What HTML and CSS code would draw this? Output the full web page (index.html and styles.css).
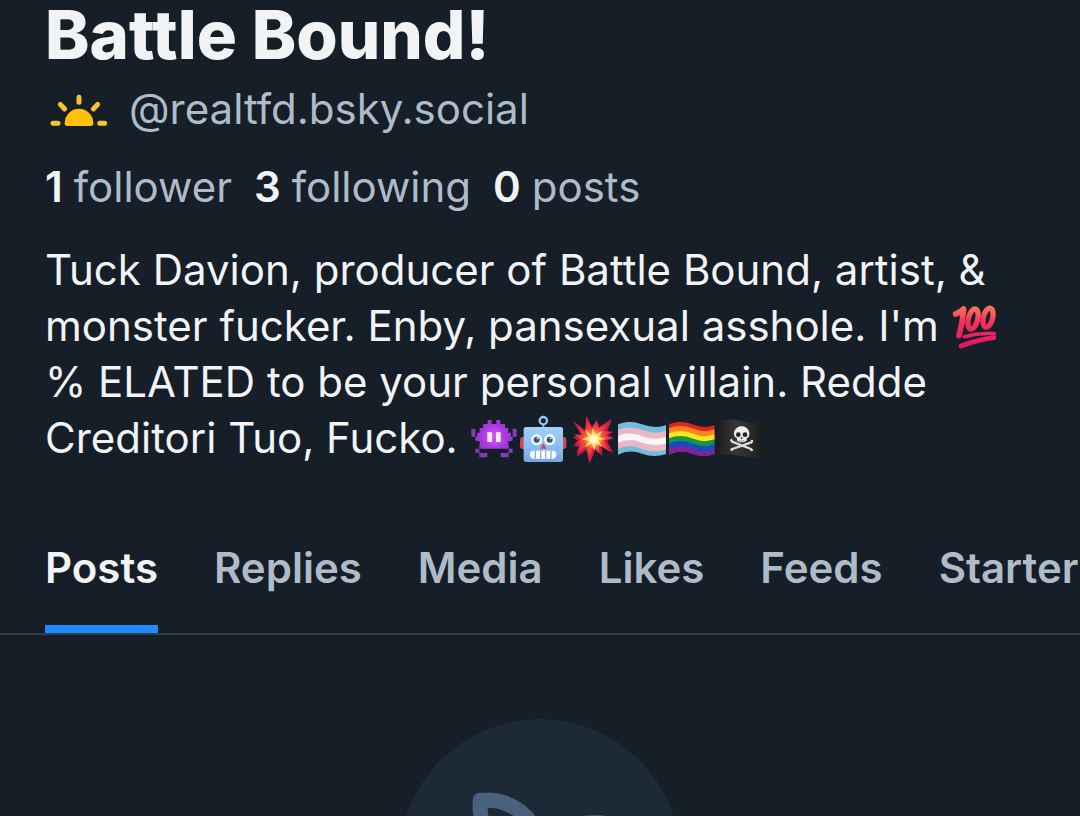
FILE: index.html
```html
<!DOCTYPE html>
<html lang="en">
<head>
    <meta charset="UTF-8">
    <meta name="viewport" content="width=device-width, initial-scale=1.0">
    <title>Battle Bound!</title>
    <link rel="stylesheet" href="styles.css">
</head>
<body>

<header class="profile">
    <h1 class="profile-name">Battle Bound!</h1>
    <div class="handle">
        <svg class="sun" viewBox="45 258 192 132" aria-hidden="true">
            <path d="M104 367a43 44 0 0 1 86 0q0 8-8 8h-70q-8 0-8-8z" fill="#ffc107"/>
            <path d="M147 289v15M91 310l13 14M203 310l-13 14M69 367h15M209 367h15" stroke="#f4c430" stroke-width="15" stroke-linecap="round"/>
        </svg>
        <span>@realtfd.bsky.social</span>
    </div>
    <div class="stats">
        <a class="stat" href="#"><strong>1</strong> follower</a>
        <a class="stat" href="#"><strong>3</strong> following</a>
        <span class="stat"><strong>0</strong> posts</span>
    </div>
    <p class="bio">
        Tuck Davion, producer of Battle Bound, artist, &amp; monster fucker. Enby, pansexual asshole. I'm
        <!-- hundred points -->
        <svg class="emoji" viewBox="62 38 147 147" role="img" aria-label="100">
            <defs>
                <linearGradient id="hundred" x1="0" y1="45" x2="0" y2="175" gradientUnits="userSpaceOnUse">
                    <stop offset="0" stop-color="#ff7a5c"/>
                    <stop offset=".4" stop-color="#f5305a"/>
                    <stop offset="1" stop-color="#e8106a"/>
                </linearGradient>
            </defs>
            <g fill="none" stroke="url(#hundred)" stroke-linecap="round" stroke-linejoin="round">
                <path stroke-width="17" d="M76 71q15-5 24-15q-3 42-14 80"/>
                <ellipse cx="128" cy="86" rx="14" ry="31" stroke-width="16" transform="rotate(14 128 86)"/>
                <ellipse cx="173" cy="82" rx="14" ry="29" stroke-width="16" transform="rotate(14 173 82)"/>
                <path stroke-width="11" d="M102 139q44-12 90-9"/>
                <path stroke-width="14" d="M92 167q50-19 99-25"/>
            </g>
        </svg>% ELATED to be your personal villain. Redde Creditori Tuo, Fucko.
        <!-- alien monster -->
        <svg class="emoji" viewBox="15 15 147 147" role="img" aria-label="Alien monster">
            <defs>
                <radialGradient id="alien" cx="87" cy="80" r="70" gradientUnits="userSpaceOnUse">
                    <stop offset="0" stop-color="#d65cf5"/>
                    <stop offset=".5" stop-color="#aa38e2"/>
                    <stop offset="1" stop-color="#7d3cae"/>
                </radialGradient>
            </defs>
            <path fill="url(#alien)" d="M68 30h12v12h14V30h12v12h14v12h10v14h8v26h-8v12h-10v10H54v-10H44V94h-8V68h8V54h10V42h14z"/>
            <path fill="url(#alien)" d="M19 56h12v24H19zM31 80h12v12H31zM143 56h12v24h-12zM131 80h12v12h-12zM43 104h12v12H43zM31 116h12v13H31zM43 129h24v13H43zM119 104h12v12h-12zM131 116h12v13h-12zM107 129h24v13h-24z"/>
            <path fill="#fff0ff" d="M67 67h14v29H67zM93 67h14v29H93z"/>
        </svg><svg class="emoji" viewBox="177 30 147 147" role="img" aria-label="Robot">
            <defs>
                <linearGradient id="robot" x1="0" y1="65" x2="0" y2="172" gradientUnits="userSpaceOnUse">
                    <stop offset="0" stop-color="#a3d0fa"/>
                    <stop offset=".7" stop-color="#85b9ef"/>
                    <stop offset="1" stop-color="#73a5df"/>
                </linearGradient>
            </defs>
            <rect x="180" y="96" width="20" height="36" rx="9" fill="#c64d60"/>
            <rect x="299" y="96" width="20" height="36" rx="9" fill="#c64d60"/>
            <path d="M250 58v12" stroke="#7bb2e6" stroke-width="6"/>
            <circle cx="250" cy="47" r="11" fill="none" stroke="#91c7f5" stroke-width="7"/>
            <rect x="191" y="66" width="118" height="105" rx="7" fill="url(#robot)"/>
            <circle cx="230" cy="104" r="17" fill="#eff4f5"/>
            <circle cx="269" cy="104" r="17" fill="#eff4f5"/>
            <circle cx="230" cy="104" r="9" fill="#355467"/>
            <circle cx="269" cy="104" r="9" fill="#355467"/>
            <circle cx="233" cy="100" r="3" fill="#fff"/>
            <circle cx="272" cy="100" r="3" fill="#fff"/>
            <path d="M250 114l10 17h-20z" fill="#c94e62"/>
            <rect x="210" y="137" width="79" height="24" rx="12" fill="#fff"/>
            <path d="M226 137v24M242 137v24M257 137v24M273 137v24" stroke="#83afe2" stroke-width="4"/>
        </svg><svg class="emoji" viewBox="326 30 147 147" role="img" aria-label="Collision">
            <defs>
                <radialGradient id="boom" cx="403" cy="102" r="68" gradientUnits="userSpaceOnUse">
                    <stop offset="0" stop-color="#fff8b0"/>
                    <stop offset=".2" stop-color="#ffb14a"/>
                    <stop offset=".45" stop-color="#f54d36"/>
                    <stop offset="1" stop-color="#d9124b"/>
                </radialGradient>
            </defs>
            <path fill="#c41c4b" d="M341 48l36 27 4-43 17 33 15-20 7 21 38-25-14 37 17 3-15 10 18 8-21 8 18 36-34-17 2 26-21-17-17 40-10-40-29 20 12-28-22-5 18-11-18-15 25-5z"/>
            <path fill="url(#boom)" d="M345 52l34 31 3-47 16 36 13-24 6 22 36-25-20 33 20 4-17 9 22 9-25 6 18 34-31-22-1 26-17-19-12 46-9-46-30 22 13-32-21 1 22-12-21-16 24 1z"/>
            <path fill="#ffe07a" d="M376 72l21 19 3-22 9 20 20-12-11 19 20 6-20 5 10 18-17-9-6 20-8-21-20 12 12-20-22-4 21-8z"/>
            <circle cx="403" cy="102" r="12" fill="#fff9c4"/>
        </svg><svg class="emoji" viewBox="21 30 147 147" role="img" aria-label="Transgender flag">
            <defs>
                <clipPath id="trans"><path d="M24 58q35-16 72 0 38 14 72 3v86q-36 12-72-1-38-14-72 3z"/></clipPath>
            </defs>
            <g clip-path="url(#trans)" fill="none" stroke-width="20">
                <rect x="21" y="40" width="147" height="120" fill="#72bddd"/>
                <path stroke="#e9b8c5" d="M20 86q38-17 76-1 38 15 74 2"/>
                <path stroke="#e9b8c5" d="M20 122q38-17 76-1 38 15 74 2"/>
                <path stroke="#faf5f7" stroke-width="19" d="M20 104q38-17 76-1 38 15 74 2"/>
            </g>
        </svg><svg class="emoji" viewBox="168 30 147 147" role="img" aria-label="Rainbow flag">
            <defs>
                <clipPath id="rainbow"><path d="M177 58q35-16 70 0 34 14 67 3v86q-34 12-68-1-34-14-69 3z"/></clipPath>
            </defs>
            <g clip-path="url(#rainbow)" fill="none" stroke-width="17">
                <rect x="168" y="40" width="147" height="120" fill="#df2422"/>
                <path stroke="#f58622" d="M175 80q36-17 72-1 34 15 69 2"/>
                <path stroke="#ffe51e" d="M175 95q36-17 72-1 34 15 69 2"/>
                <path stroke="#159548" d="M175 110q36-17 72-1 34 15 69 2"/>
                <path stroke="#174bc0" d="M175 125q36-17 72-1 34 15 69 2"/>
                <path stroke="#7a2499" d="M175 141q36-17 72-1 34 15 69 2"/>
            </g>
        </svg><svg class="emoji" viewBox="315 30 147 147" role="img" aria-label="Pirate flag">
            <defs>
                <linearGradient id="pirate" x1="328" x2="466" y1="0" y2="0" gradientUnits="userSpaceOnUse">
                    <stop offset="0" stop-color="#202020"/>
                    <stop offset=".35" stop-color="#383838"/>
                    <stop offset=".7" stop-color="#292929"/>
                    <stop offset="1" stop-color="#161719"/>
                </linearGradient>
            </defs>
            <path fill="url(#pirate)" d="M328 49q32-10 68-1 34 10 66 4v103q-33 6-67-2-34-8-67-2z"/>
            <path stroke="#dcdcdc" stroke-width="7" stroke-linecap="round" d="M366 110l57 22M424 112l-57 20"/>
            <g fill="#dcdcdc">
                <circle cx="364" cy="106" r="4"/>
                <circle cx="365" cy="134" r="4"/>
                <circle cx="426" cy="108" r="4"/>
                <circle cx="425" cy="135" r="4"/>
            </g>
            <path fill="#ededed" d="M372 86c0-30 46-30 46 0 0 9-3 12-8 14v7q-15 10-29 0v-7c-6-3-9-7-9-14z"/>
            <circle cx="385" cy="89" r="7" fill="#242424"/>
            <circle cx="405" cy="89" r="7" fill="#242424"/>
            <path d="M395 95l4 6h-8z" fill="#242424"/>
            <path d="M389 105v4M395 106v5M401 105v4" stroke="#666" stroke-width="2"/>
        </svg>
    </p>
</header>

<nav class="tabs">
    <a class="tab active" href="#">Posts</a>
    <a class="tab" href="#">Replies</a>
    <a class="tab" href="#">Media</a>
    <a class="tab" href="#">Likes</a>
    <a class="tab" href="#">Feeds</a>
    <a class="tab" href="#">Starter Packs</a>
</nav>

<main class="empty">
    <div class="empty-circle">
        <svg class="growth" viewBox="0 0 24 24" aria-hidden="true">
            <path fill="#4a617e" fill-rule="evenodd" d="M3 4a1 1 0 0 1 1-1h1a8 8 0 0 1 7.750 6A8 8 0 0 1 19 6h1a1 1 0 0 1 1 1v1a8 8 0 0 1-8 8v4a1 1 0 1 1-2 0v-7a8 8 0 0 1-8-8V4Zm2 1a6 6 0 0 0 6 6 6 6 0 0 0-6-6Zm8 9a6 6 0 0 0 6-6 6 6 0 0 0-6 6Z"/>
        </svg>
    </div>
</main>

</body>
</html>
```

FILE: styles.css
```css
* {
    margin: 0;
    padding: 0;
    box-sizing: border-box;
}

body {
    font-family: Inter, "Liberation Sans", sans-serif;
    font-size: 42px;
    line-height: 56px;
    color: #f1f3f5;
    background-color: #161e27;
    overflow-x: hidden;
}

a {
    color: inherit;
    text-decoration: none;
}

.profile {
    padding: 0 45px;
}

.profile-name {
    font-size: 67px;
    line-height: 70px;
    font-weight: 800;
}

.handle {
    display: flex;
    align-items: center;
    gap: 20px;
    margin-top: 11px;
    color: #aebbc9;
}

.sun {
    width: 64px;
    height: 44px;
}

.stats {
    display: flex;
    gap: 22px;
    margin-top: 22px;
    color: #aebbc9;
}

.stat {
    display: flex;
    gap: 11px;
}

.stat strong {
    font-weight: 600;
    color: #f1f3f5;
}

.bio {
    margin-top: 27px;
    padding-right: 10px;
}

.emoji {
    width: 49px;
    height: 49px;
    vertical-align: -11px;
}

.tabs {
    display: flex;
    gap: 56px;
    margin-top: 74px;
    padding: 0 45px;
    border-bottom: 2px solid #2f3d4c;
    overflow: hidden;
}

.tab {
    flex-shrink: 0;
    padding-bottom: 29px;
    border-bottom: 8px solid transparent;
    font-weight: 600;
    color: #aebbc9;
}

.tab.active {
    color: #f1f3f5;
    border-bottom-color: #208bfe;
}

.empty {
    display: flex;
    justify-content: center;
    padding: 84px 45px;
}

.empty-circle {
    display: flex;
    align-items: center;
    justify-content: center;
    width: 282px;
    height: 282px;
    border-radius: 50%;
    background-color: #1e2936;
}

.growth {
    width: 181px;
    height: 181px;
}
```
